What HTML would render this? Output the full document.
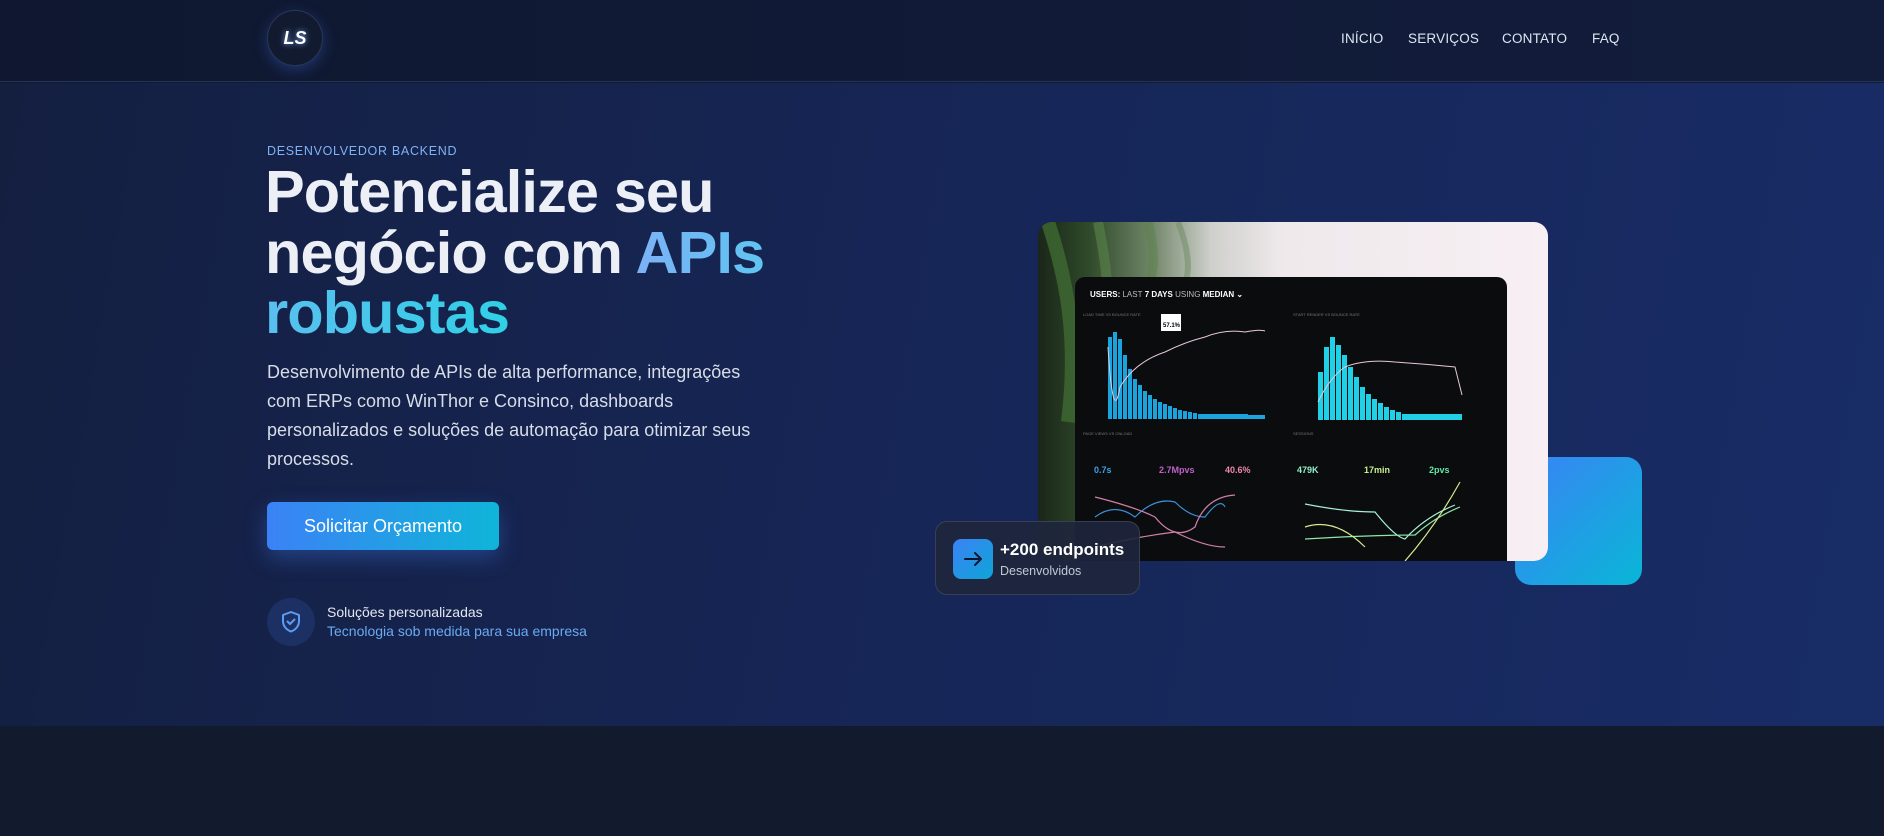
<!DOCTYPE html>
<html><head><meta charset="utf-8">
<style>
*{margin:0;padding:0;box-sizing:border-box}
html,body{width:1884px;height:836px;overflow:hidden;background:#121a2e;font-family:"Liberation Sans",sans-serif}
.header{position:absolute;left:0;top:0;width:1884px;height:82px;background:linear-gradient(90deg,#0f1830,#111b38 60%,#121d3c);border-bottom:1px solid #24335a}
.logo{position:absolute;left:267px;top:10px;width:56px;height:56px;border-radius:50%;background:#121a30;border:1px solid #2a3656;box-shadow:0 4px 14px rgba(60,110,220,.35);color:#fff;font-weight:700;font-style:italic;font-size:18px;text-align:center;line-height:54px;text-shadow:0 0 6px rgba(140,180,255,.9)}
.nav{position:absolute;top:31px;font-size:13.5px;font-weight:500;color:#dfe6f2;letter-spacing:.2px}
.hero{position:absolute;left:0;top:83px;width:1884px;height:643px;background:linear-gradient(100deg,#141f40 0%,#162555 45%,#182c66 100%)}
.bottom{position:absolute;left:0;top:726px;width:1884px;height:110px;background:#121a2e}
.eyebrow{position:absolute;left:267px;top:144px;font-size:12.5px;color:#7fb3f5;letter-spacing:.7px;font-weight:500}
h1{position:absolute;left:265px;top:162px;font-size:59.5px;line-height:60.5px;font-weight:700;color:#eceff5;letter-spacing:-0.9px;width:560px}
.g1{background:linear-gradient(90deg,#7bb2f7,#60c4f0);-webkit-background-clip:text;color:transparent}
.g2{background:linear-gradient(90deg,#5ac0ef,#2fd0e6);-webkit-background-clip:text;color:transparent}
.p{position:absolute;left:267px;top:358px;white-space:nowrap;font-size:18px;line-height:29px;color:#d7dde8}
.btn{position:absolute;left:267px;top:502px;width:232px;height:48px;border-radius:6px;background:linear-gradient(90deg,#3b82f6,#0fb5d8);color:#fff;font-size:18px;font-weight:500;text-align:center;line-height:48px;box-shadow:0 8px 22px rgba(59,130,246,.35)}
.shield{position:absolute;left:267px;top:598px;width:48px;height:48px;border-radius:50%;background:#1d3064}
.f1{position:absolute;left:327px;top:604px;font-size:14px;color:#e3e7ef}
.f2{position:absolute;left:327px;top:623px;font-size:14px;color:#6aaaf2}
.blue{position:absolute;left:1515px;top:457px;width:127px;height:128px;border-radius:16px;background:linear-gradient(135deg,#3b82f6,#09b6d6)}
.card{position:absolute;left:1038px;top:222px;width:510px;height:339px;border-radius:14px;overflow:hidden;background:linear-gradient(90deg,#1a2619 0%,#2f4a2a 10%,#6e8466 22%,#cfd0cc 34%,#efe9ec 48%,#f7eff3 100%)}
.badge{position:absolute;left:935px;top:521px;width:205px;height:74px;border-radius:12px;background:rgba(30,38,60,.92);border:1px solid rgba(255,255,255,.12)}
.bi{position:absolute;left:17px;top:17px;width:40px;height:40px;border-radius:8px;background:linear-gradient(135deg,#3b82f6,#0ea5d6)}
.bt{position:absolute;left:64px;top:18px;font-size:17px;font-weight:700;color:#fff}
.bs{position:absolute;left:64px;top:42px;font-size:12.5px;color:#c2c8d4}
</style></head><body>
<div class="header">
  <div class="logo">LS</div>
  <div class="nav" style="left:1341px">INÍCIO</div>
  <div class="nav" style="left:1408px">SERVIÇOS</div>
  <div class="nav" style="left:1502px">CONTATO</div>
  <div class="nav" style="left:1592px">FAQ</div>
</div>
<div class="hero"></div>
<div class="bottom"></div>
<div class="eyebrow">DESENVOLVEDOR BACKEND</div>
<h1>Potencialize seu negócio com <span class="g1">APIs</span><br><span class="g2">robustas</span></h1>
<div class="p">Desenvolvimento de APIs de alta performance, integrações<br>com ERPs como WinThor e Consinco, dashboards<br>personalizados e soluções de automação para otimizar seus<br>processos.</div>
<div class="btn">Solicitar Orçamento</div>
<div class="shield"><svg width="48" height="48" viewBox="0 0 48 48"><path d="M24 14l8 3v6c0 5-3.5 9-8 10.5C19.5 32 16 28 16 23v-6z" fill="none" stroke="#5b9cf5" stroke-width="2" stroke-linejoin="round"/><path d="M20.5 23.5l2.5 2.5 4.5-4.5" fill="none" stroke="#5b9cf5" stroke-width="2" stroke-linecap="round" stroke-linejoin="round"/></svg></div>
<div class="f1">Soluções personalizadas</div>
<div class="f2">Tecnologia sob medida para sua empresa</div>

<div class="blue"></div>
<div class="card">
<svg width="510" height="339" viewBox="0 0 510 339" style="position:absolute;left:0;top:0">
  <path d="M10 0 C30 60 40 120 30 200" stroke="#3f6a32" stroke-width="14" fill="none" opacity=".8"/>
  <path d="M60 0 C70 50 75 90 60 150" stroke="#567d46" stroke-width="10" fill="none" opacity=".7"/>
  <path d="M110 0 C115 20 118 40 112 60" stroke="#5f8250" stroke-width="9" fill="none" opacity=".6"/>
  <path d="M140 0 C150 25 152 45 148 58" stroke="#6c8b60" stroke-width="6" fill="none" opacity=".5"/>
  <rect x="37" y="55" width="432" height="300" rx="10" fill="#0b0c0e"/>
  <g transform="translate(37,55)" font-family="Liberation Sans,sans-serif">
    <text x="15" y="20" font-size="8" font-weight="700" fill="#fff">USERS: <tspan fill="#bbb" font-weight="400">LAST</tspan> 7 DAYS <tspan fill="#bbb" font-weight="400">USING</tspan> MEDIAN ⌄</text>
    <text x="8" y="39" font-size="4" fill="#777">LOAD TIME VS BOUNCE RATE</text>
    <text x="218" y="39" font-size="4" fill="#777">START RENDER VS BOUNCE RATE</text>
    <g fill="#1aa3dc">
      <rect x="33" y="60" width="4" height="82"/><rect x="38" y="55" width="4" height="87"/><rect x="43" y="62" width="4" height="80"/><rect x="48" y="78" width="4" height="64"/><rect x="53" y="92" width="4" height="50"/><rect x="58" y="102" width="4" height="40"/><rect x="63" y="108" width="4" height="34"/><rect x="68" y="114" width="4" height="28"/><rect x="73" y="118" width="4" height="24"/><rect x="78" y="122" width="4" height="20"/><rect x="83" y="125" width="4" height="17"/><rect x="88" y="127" width="4" height="15"/><rect x="93" y="129" width="4" height="13"/><rect x="98" y="131" width="4" height="11"/><rect x="103" y="133" width="4" height="9"/><rect x="108" y="134" width="4" height="8"/><rect x="113" y="135" width="4" height="7"/><rect x="118" y="136" width="4" height="6"/><rect x="123" y="137" width="50" height="5"/><rect x="173" y="138" width="17" height="4"/>
    </g>
    <path d="M33 70 Q38 150 45 110 Q60 85 90 75 Q110 65 130 60 Q150 52 170 55 Q185 52 190 54" stroke="#e8c8d8" stroke-width="1" fill="none"/>
    <rect x="86" y="37" width="20" height="17" fill="#fff"/><text x="88" y="50" font-size="6" font-weight="700" fill="#000">57.1%</text>
    <g fill="#20d0e6">
      <rect x="243" y="95" width="5" height="48"/><rect x="249" y="70" width="5" height="73"/><rect x="255" y="60" width="5" height="83"/><rect x="261" y="68" width="5" height="75"/><rect x="267" y="78" width="5" height="65"/><rect x="273" y="90" width="5" height="53"/><rect x="279" y="100" width="5" height="43"/><rect x="285" y="110" width="5" height="33"/><rect x="291" y="117" width="5" height="26"/><rect x="297" y="122" width="5" height="21"/><rect x="303" y="126" width="5" height="17"/><rect x="309" y="130" width="5" height="13"/><rect x="315" y="133" width="5" height="10"/><rect x="321" y="135" width="5" height="8"/><rect x="327" y="137" width="60" height="6"/>
    </g>
    <path d="M243 125 Q255 100 270 90 Q290 82 320 85 Q360 88 380 90 L387 118" stroke="#e8c8d8" stroke-width="1" fill="none"/>
    <text x="8" y="158" font-size="4" fill="#777">PAGE VIEWS VS ONLOAD</text>
    <text x="218" y="158" font-size="4" fill="#777">SESSIONS</text>
    <g font-size="9" font-weight="700">
      <text x="19" y="196" fill="#3aa0e8">0.7s</text><text x="84" y="196" fill="#c060c8">2.7Mpvs</text><text x="150" y="196" fill="#f08aa8">40.6%</text>
      <text x="222" y="196" fill="#8ff0c8">479K</text><text x="289" y="196" fill="#c8f090">17min</text><text x="354" y="196" fill="#60e8a8">2pvs</text>
    </g>
    <path d="M20 240 Q40 225 60 240 Q80 220 100 225 Q115 240 130 240 Q145 220 150 230" stroke="#3a8fd8" stroke-width="1.2" fill="none"/>
    <path d="M20 220 Q60 230 80 240 Q100 265 120 250 Q130 220 160 218" stroke="#d080a8" stroke-width="1.2" fill="none"/>
    <path d="M20 270 Q60 260 100 255 Q130 270 150 270" stroke="#d080a8" stroke-width="1.2" fill="none"/>
    <path d="M230 227 Q270 235 300 235 Q320 260 330 262 Q350 240 380 228" stroke="#a8f0d8" stroke-width="1.2" fill="none"/>
    <path d="M230 262 Q300 258 340 258 Q360 240 385 230" stroke="#8ee8a8" stroke-width="1.2" fill="none"/>
    <path d="M230 250 Q260 240 290 270" stroke="#d8e890" stroke-width="1.2" fill="none"/>
    <path d="M330 284 Q360 250 385 205" stroke="#d8e890" stroke-width="1.2" fill="none"/>
  </g>
</svg>
</div>
<div class="badge">
  <div class="bi"><svg width="40" height="40" viewBox="0 0 40 40"><path d="M12 20h16M22 14l6 6-6 6" stroke="#0c1430" stroke-width="2" fill="none" stroke-linecap="round" stroke-linejoin="round"/></svg></div>
  <div class="bt">+200 endpoints</div>
  <div class="bs">Desenvolvidos</div>
</div>
</body></html>
